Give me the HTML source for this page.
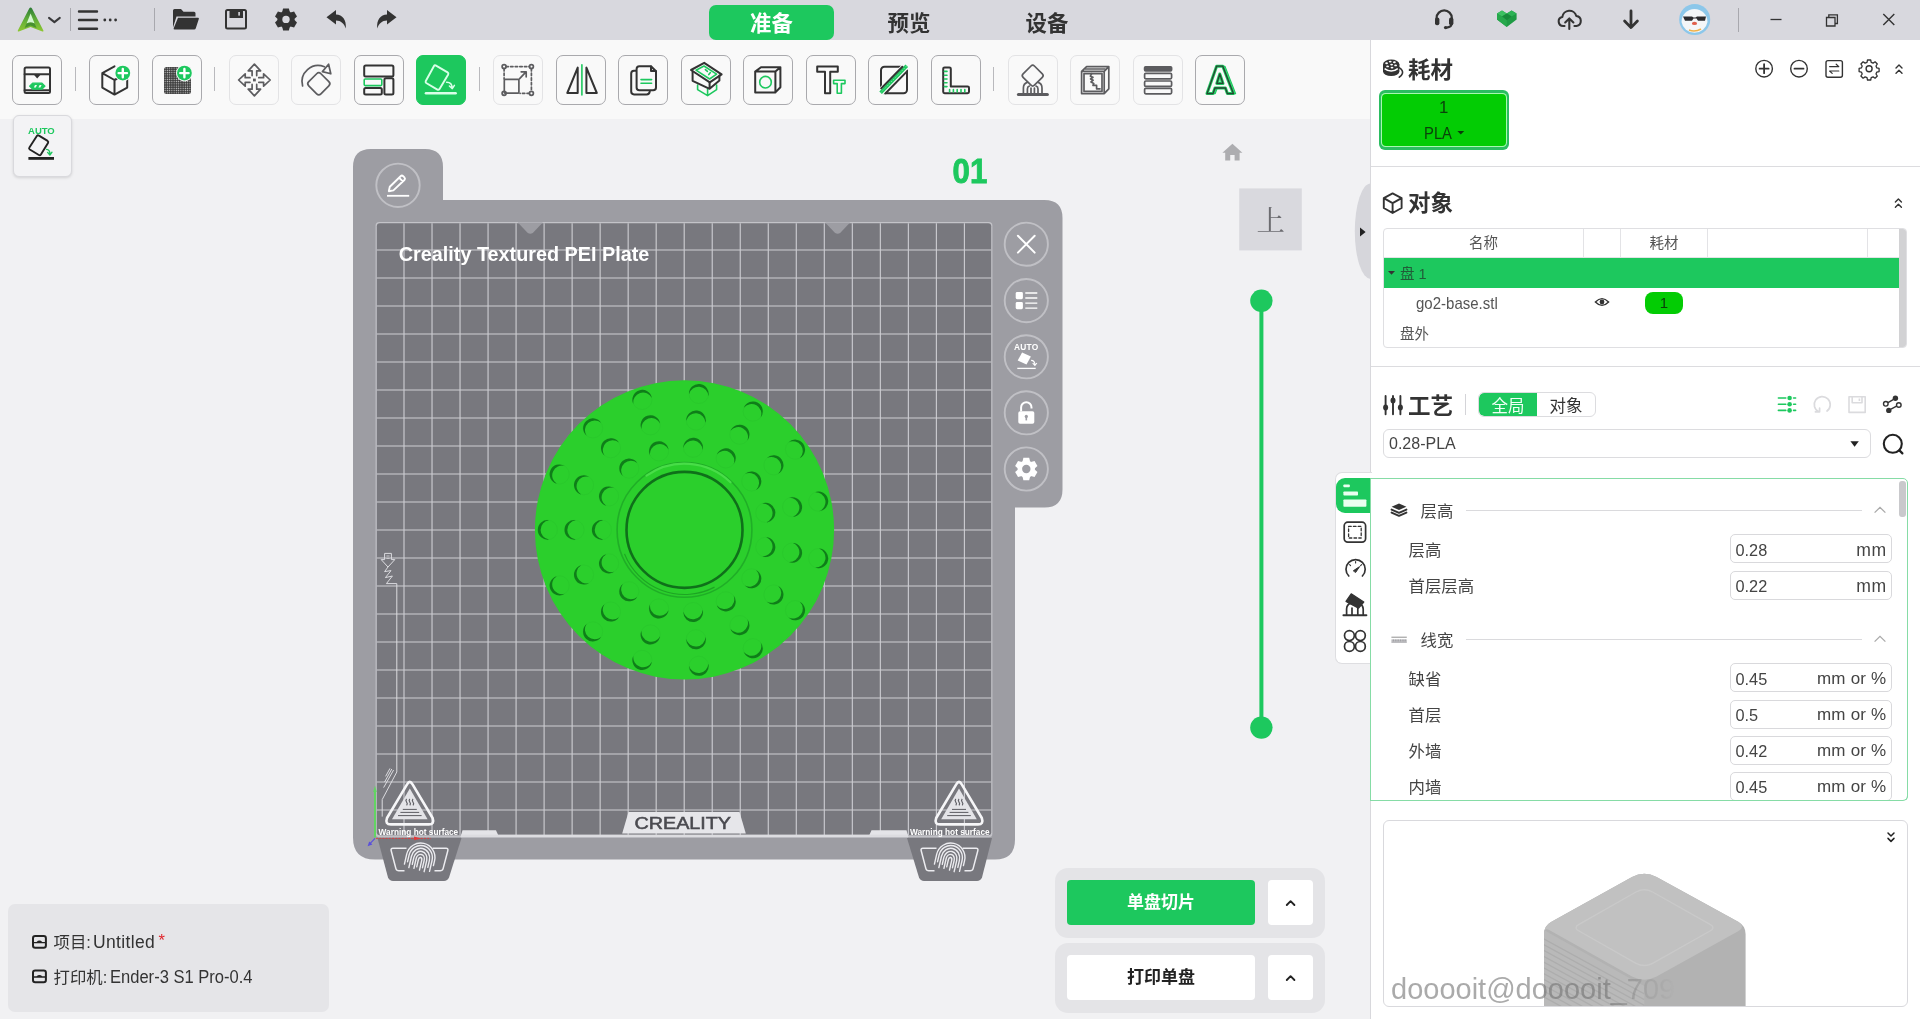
<!DOCTYPE html>
<html lang="zh-CN">
<head>
<meta charset="utf-8">
<title>Creality Print</title>
<style>
*{box-sizing:border-box;margin:0;padding:0}
html,body{width:1920px;height:1019px;overflow:hidden;background:#f1f1f3}
body{position:relative;will-change:transform;font-family:"Liberation Sans","Noto Sans CJK SC",sans-serif;color:#333;font-size:16px;line-height:1}
.abs{position:absolute}
svg{position:absolute;overflow:visible}
#topbar{position:absolute;left:0;top:0;width:1920px;height:40px;background:#d8d8de}
#toolbar{position:absolute;left:0;top:40px;width:1370px;height:78.6px;background:#f9f9f9}
#rpanel{position:absolute;left:1370px;top:40px;width:550px;height:979px;background:#fff}
.tb{position:absolute;top:55px;width:50px;height:50px;border:1px solid #a9a9ad;border-radius:7px;background:#f9f9f9}
.tb.dis{border-color:#e3e3e5}
.tb.on{background:#1dc85e;border-color:#1dc85e}
.tsep{position:absolute;top:67px;width:1px;height:24px;background:#b9b9bd}
.tab{position:absolute;top:5px;height:35px;font-weight:bold;font-size:21.4px;line-height:39px;text-align:center;color:#333}
.h1{position:absolute;font-weight:bold;font-size:22.5px;line-height:24px;color:#333;white-space:nowrap}
.t{position:absolute;white-space:nowrap;line-height:20px}
.inp{position:absolute;left:1730px;width:162px;height:29px;border:1px solid #d9d9dc;border-radius:5px;background:#fff}
.inp b{position:absolute;left:4.5px;top:4.4px;font-weight:normal;font-size:16.3px;line-height:20px;color:#444}
.inp i{position:absolute;right:4.6px;top:4.4px;font-style:normal;font-size:17px;line-height:20px;color:#444;letter-spacing:.2px}
.inp i.m{font-size:17.6px;letter-spacing:.5px;right:4.4px}
.lbl{position:absolute;left:1408.6px;font-size:16.4px;line-height:20px;color:#444;white-space:nowrap}
.sx{display:inline-block;transform-origin:0 50%}
</style>
</head>
<body>
<div id="topbar"></div>
<div id="toolbar"></div>
<!-- top bar left icons -->
<svg class="abs" style="left:0;top:0" width="420" height="40" viewBox="0 0 420 40">
  <defs>
    <linearGradient id="lg1" x1="0" y1="0" x2="0" y2="1"><stop offset="0" stop-color="#2a7a35"/><stop offset=".45" stop-color="#5aa838"/><stop offset="1" stop-color="#8fc833"/></linearGradient>
  </defs>
  <path d="M30.6 7.4 Q31.4 7.4 32 8.6 L43.4 30.6 Q43.8 31.8 42.4 31.4 L30.6 27 L18.8 31.4 Q17.4 31.8 17.8 30.6 L29.2 8.6 Q29.8 7.4 30.6 7.4 Z" fill="url(#lg1)"/>
  <path d="M30.6 13.6 L34.6 23.4 Q30.6 21.6 26.6 23.4 Z" fill="#d4f7d0"/>
  <path d="M26.6 23.4 Q30.6 21.6 34.6 23.4 L36.6 28 L30.6 25.6 L24.6 28 Z" fill="#3f8a2e" opacity=".85"/>
  <path d="M49 17.9 L54.4 22.1 L59.8 17.9" fill="none" stroke="#3a3a3c" stroke-width="2" stroke-linecap="round" stroke-linejoin="round"/>
  <rect x="70" y="8" width="1" height="23" fill="#a8a8ae"/>
  <g stroke="#333" stroke-width="2.4" stroke-linecap="round"><path d="M79 11.5H97M79 20H97M79 28.7H97"/></g>
  <g fill="#333"><circle cx="104.8" cy="20" r="1.4"/><circle cx="110.2" cy="20" r="1.4"/><circle cx="115.6" cy="20" r="1.4"/></g>
  <rect x="154" y="8" width="1" height="23" fill="#a8a8ae"/>
  <!-- folder -->
  <path d="M173 10.5 q0-1.5 1.5-1.5 h6.5 l2.5 2.8 h10.5 q1.5 0 1.5 1.5 v3.2 h-19 l-3.5 11 Z" fill="#333"/>
  <path d="M178 17.8 h20 q1.2 0 0.8 1.2 l-3 9.3 q-0.4 1.2 -1.6 1.2 h-19.5 q-1.4 0 -1 -1.2 Z" fill="#333"/>
  <!-- save -->
  <rect x="226" y="10" width="20" height="18.6" rx="1.5" fill="none" stroke="#333" stroke-width="2"/>
  <path d="M229.5 10 h13.5 v8 h-13.5 Z" fill="#333"/>
  <rect x="238.3" y="12" width="1.6" height="3.6" fill="#d8d8de"/>
  <!-- gear -->
  <g transform="translate(286 19.4)" fill="#333">
    <path id="gt" d="M-2.9 -11 h5.8 l0.9 3.6 h-7.6 Z"/>
    <use href="#gt" transform="rotate(60)"/><use href="#gt" transform="rotate(120)"/><use href="#gt" transform="rotate(180)"/><use href="#gt" transform="rotate(240)"/><use href="#gt" transform="rotate(300)"/>
    <circle r="8.6"/><circle r="3.7" fill="#d8d8de"/>
  </g>
  <!-- undo -->
  <path d="M326.5 17.2 L336 10 V14.6 C342.5 15 346.5 19.5 345.8 28.4 C344 23.2 341 20.6 336 20.4 V24.6 Z" fill="#333"/>
  <!-- redo -->
  <path d="M396.5 17.2 L387 10 V14.6 C380.5 15 376.5 19.5 377.2 28.4 C379 23.2 382 20.6 387 20.4 V24.6 Z" fill="#333"/>
</svg>
<!-- tabs -->
<div class="tab" style="left:709px;width:125px;background:#1dc85e;color:#fff;border-radius:7px">准备</div>
<div class="tab" style="left:859px;width:100px">预览</div>
<div class="tab" style="left:997px;width:100px">设备</div>
<svg class="abs" style="left:1420px;top:0" width="500" height="40" viewBox="1420 0 500 40">
  <!-- headset -->
  <g fill="none" stroke="#333" stroke-width="2.2" stroke-linecap="round">
    <path d="M1436.6 20 v-2 a7.6 7.6 0 0 1 15.2 0 v2"/>
    <path d="M1451.8 23 q0 4 -5 4.6"/>
  </g>
  <rect x="1435" y="17.6" width="4.4" height="7.6" rx="2" fill="#333"/>
  <rect x="1449" y="17.6" width="4.4" height="7.6" rx="2" fill="#333"/>
  <circle cx="1445.6" cy="27.6" r="1.7" fill="#333"/>
  <!-- heart cube -->
  <path d="M1497 13.5 L1502 10.5 L1506.8 13.5 L1511.6 10.5 L1516.6 13.5 L1516.6 19.5 L1506.8 27 L1497 19.5 Z" fill="#1f9a44"/>
  <path d="M1497 13.5 L1502 10.5 L1506.8 13.5 L1502 16.6 Z" fill="#3cc061"/>
  <path d="M1506.8 13.5 L1511.6 10.5 L1516.6 13.5 L1511.6 16.6 Z" fill="#2db255"/>
  <path d="M1502 16.6 L1506.8 13.5 L1511.6 16.6 L1506.8 20.2 Z" fill="#178a3a"/>
  <path d="M1497 13.5 L1502 16.6 L1506.8 20.2 L1506.8 27 L1497 19.5 Z" fill="#27a84c"/>
  <!-- cloud upload -->
  <g transform="translate(1569.3 20) scale(.9) translate(-1569.3 -20)"><path d="M1564 26.6 h-1.5 a5 5 0 0 1 -1 -9.9 a8 8 0 0 1 15.6 -1.2 a5.6 5.6 0 0 1 0.2 11.1 h-2.3" fill="none" stroke="#333" stroke-width="2.3" stroke-linecap="round" stroke-linejoin="round"/></g>
  <path d="M1569.3 29 v-10 M1565.2 22.4 l4.1 -4 l4.1 4" fill="none" stroke="#333" stroke-width="2.1" stroke-linecap="round" stroke-linejoin="round"/>
  <!-- down arrow -->
  <path d="M1631 11 v16 M1624.6 21 l6.4 6.6 l6.4 -6.6" fill="none" stroke="#333" stroke-width="2.8" stroke-linecap="round" stroke-linejoin="round"/>
  <!-- avatar -->
  <circle cx="1694.7" cy="19.5" r="15.5" fill="#8cc7ea"/>
  <path d="M1681.5 22 a13 13 0 0 1 26 0 a13.2 13 0 0 1 -26 0 Z" fill="#f4f6f8"/>
  <path d="M1683 16.5 h9 l1.5 1 h2 l1.5 -1 h9 l-1 4.2 h-7 l-1.5 -2.2 h-3 l-1.5 2.2 h-7 Z" fill="#2b2b2e"/>
  <ellipse cx="1694.5" cy="23.4" rx="2.6" ry="1.6" fill="#e0604c"/>
  <path d="M1689 30 q6 2.5 12 -1" stroke="#f0b24a" stroke-width="1.6" fill="none"/>
  <rect x="1738" y="8" width="1" height="24" fill="#a8a8ae"/>
  <!-- window controls -->
  <path d="M1770.5 19.5 h11" stroke="#333" stroke-width="1.3"/>
  <path d="M1826.5 17.5 h8.5 v8.5 h-8.5 Z M1828.8 17.5 v-2.6 h8.6 v8.6 h-2.4" fill="none" stroke="#333" stroke-width="1.3"/>
  <path d="M1883.3 14 l11 11 M1894.3 14 l-11 11" stroke="#333" stroke-width="1.4"/>
</svg>
<style>
.tb svg{left:-1px;top:-1px;width:50px;height:50px}
.k{fill:none;stroke:#333;stroke-width:2;stroke-linejoin:round;stroke-linecap:round}
.kd{fill:none;stroke:#5c5c5f;stroke-width:1.7;stroke-linejoin:round;stroke-linecap:round}
.g{fill:none;stroke:#1dc85e;stroke-width:1.6;stroke-linejoin:round;stroke-linecap:round}
</style>
<div class="tsep" style="left:75px"></div><div class="tsep" style="left:214px"></div><div class="tsep" style="left:479px"></div><div class="tsep" style="left:993px"></div>
<!-- 1 printer -->
<div class="tb" style="left:12px"><svg viewBox="0 0 50 50">
 <rect x="12.6" y="12.6" width="25.4" height="25.4" rx="1.5" class="k" stroke-width="2.2"/>
 <path d="M12.6 19.2H38" class="k" stroke-width="1.4"/><path d="M21.5 19.2h7.4l-3.7 4.2Z" fill="#333"/>
 <path d="M12.6 35.2H38" class="k" stroke-width="1.4"/>
 <path d="M17.6 31.2 L20.6 28.2 H30 L33 31.2 L30 34.2 H20.6 Z" fill="#1dc85e" stroke="#1dc85e" stroke-width="1.2" stroke-linejoin="round"/><path d="M21.8 32.6l1.2-2.6h2l-1.2 2.6ZM26.4 32.6l1.2-2.6h2l-1.2 2.6Z" fill="#e8fff0"/>
</svg></div>
<!-- 2 cube+ -->
<div class="tb" style="left:89px"><svg viewBox="0 0 50 50">
 <path d="M25.5 11.3 L13.3 18.2 V32.6 L25.5 39.6 L38.2 32.6 V18.2 M13.3 18.2 L25.5 25 V39.6 M25.5 25 L38.2 18.2" class="k"/>
 <circle cx="33.8" cy="18.1" r="8.4" fill="#f9f9f9"/><circle cx="33.8" cy="18.1" r="7.4" fill="#1dc85e"/>
 <path d="M29.6 18.1h8.4M33.8 13.9v8.4" stroke="#fff" stroke-width="2.4" stroke-linecap="round"/>
</svg></div>
<!-- 3 grid+ -->
<div class="tb" style="left:152px"><svg viewBox="0 0 50 50">
 <defs><pattern id="dots" x="12" y="12" width="2.25" height="2.25" patternUnits="userSpaceOnUse"><rect width="2.25" height="2.25" fill="#333"/><rect x="0.55" y="0.55" width="1.15" height="1.15" fill="#d9d9d9"/></pattern></defs>
 <rect x="12" y="12" width="27" height="27" rx="2.5" fill="url(#dots)"/>
 <circle cx="32.4" cy="18.1" r="8.4" fill="#f9f9f9"/><circle cx="32.4" cy="18.1" r="7.4" fill="#1dc85e"/>
 <path d="M28.2 18.1h8.4M32.4 13.9v8.4" stroke="#fff" stroke-width="2.4" stroke-linecap="round"/>
</svg></div>
<!-- 4 move -->
<div class="tb dis" style="left:229px"><svg viewBox="0 0 50 50"><g transform="translate(25.4 25)">
 <path id="mv" d="M-2.3 -4.4 V-9.2 H-6.2 L0 -15.8 L6.2 -9.2 H2.3 V-4.4" class="kd" stroke-width="1.6"/>
 <use href="#mv" transform="rotate(90)"/><use href="#mv" transform="rotate(180)"/><use href="#mv" transform="rotate(270)"/>
 <rect x="-1.4" y="-1.4" width="2.8" height="2.8" fill="#5c5c5f"/></g>
</svg></div>
<!-- 5 rotate -->
<div class="tb dis" style="left:291px"><svg viewBox="0 0 50 50">
 <rect x="-8.6" y="-8.6" width="17.2" height="17.2" rx="3" transform="translate(27.8 28.8) rotate(45)" class="kd"/>
 <path d="M11.6 31 A16.2 16.2 0 0 1 33.4 11.8" class="kd"/>
 <path d="M31.4 16.6 L37.6 9.2 L39.8 18.8 Z" class="kd"/>
</svg></div>
<!-- 6 layout -->
<div class="tb" style="left:354px"><svg viewBox="0 0 50 50">
 <rect x="10.2" y="10.6" width="29.2" height="10.8" rx="1.5" class="k"/>
 <rect x="10.2" y="24" width="17.6" height="6.6" rx="1" class="g" stroke-width="2" fill="#b8f0cf"/>
 <rect x="10.2" y="33" width="17.6" height="6.4" rx="1.5" class="k"/>
 <rect x="30.4" y="23.3" width="9" height="16.1" rx="1.5" class="k"/>
</svg></div>
<!-- 7 lay on face (active) -->
<div class="tb on" style="left:416px"><svg viewBox="0 0 50 50">
 <path d="M19.6 10.4 L31.6 17.4 Q32.8 18.2 32.2 19.4 L23.4 34.2 Q22.6 35.2 21.4 34.6 L10.2 28 Q9.2 27.2 9.8 26 L18 11 Q18.6 9.9 19.6 10.4 Z" fill="none" stroke="#d9ffe8" stroke-width="1.9" stroke-linejoin="round"/>
 <path d="M10.5 45.5" />
 <path d="M10 38.3 H39.6" stroke="#d9ffe8" stroke-width="2.6" stroke-linecap="round"/>
 <path d="M30.6 27.2 Q35.8 27 36.2 32.8 M33.4 31 L36.3 33.6 L38.4 30.4" fill="none" stroke="#d9ffe8" stroke-width="1.5" stroke-linecap="round" stroke-linejoin="round"/>
</svg></div>
<!-- 8 scale -->
<div class="tb dis" style="left:493px"><svg viewBox="0 0 50 50">
 <path d="M13 11.6 H36.6 M38.4 13.6 V36.4 M36.4 38.3 H27 M11.1 13.6 V24" class="kd" stroke-width="1.4" stroke-dasharray="2.4 2.2" stroke-linecap="butt"/>
 <circle cx="11.1" cy="11.6" r="2" class="kd" stroke-width="1.2"/><circle cx="38.4" cy="11.6" r="2" class="kd" stroke-width="1.2"/><circle cx="38.4" cy="38.3" r="2" class="kd" stroke-width="1.2"/><circle cx="11.1" cy="38.3" r="2" class="kd" stroke-width="1.2"/>
 <rect x="11.3" y="24.4" width="14.6" height="13.8" rx="1" class="kd" stroke-width="2"/>
 <path d="M26.4 23.8 L32.8 17.2 M28.2 16.8 H33.2 V21.8" class="kd" stroke-width="1.6"/>
</svg></div>
<!-- 9 mirror -->
<div class="tb" style="left:556px"><svg viewBox="0 0 50 50">
 <path d="M21.7 12.6 V38 H11.3 Z M30.4 12.6 V38 H40.8 Z" class="k"/>
 <path d="M25.9 9.8 V40" class="g" stroke-width="1.5"/>
</svg></div>
<!-- 10 copy -->
<div class="tb" style="left:618px"><svg viewBox="0 0 50 50">
 <path d="M18 15.8 H16 Q13.2 15.8 13.2 18.6 V36.6 Q13.2 39.4 16 39.4 H28.6 Q31.4 39.4 31.8 36.4" class="k"/>
 <path d="M33 11.2 H21.4 Q18.6 11.2 18.6 14 V32.4 Q18.6 35.2 21.4 35.2 H35.2 Q38 35.2 38 32.4 V16.2 Z" class="k" fill="#f9f9f9"/>
 <path d="M33 11.4 V16 H37.8" class="k" stroke-width="1.3"/>
 <path d="M23 24.6 H33.6 M23 28.2 H33.6" class="g" stroke-width="1.8"/>
</svg></div>
<!-- 11 split/box -->
<div class="tb" style="left:681px"><svg viewBox="0 0 50 50">
 <path d="M16.6 30 V34.6 L26.6 40.6 L35.6 34.6 V30 M26.6 40.6 V34" class="g" stroke-width="1.4"/>
 <path d="M11.6 16.6 V25.8 L28.6 33.8 L38.4 25.6 V20.6 M28.6 33.8 V27.4" class="k" stroke-width="1.8"/>
 <path d="M23.2 7.8 L40.6 19.4 L28.8 27.4 L10 15 Z" class="k" stroke-width="1.8" fill="#f9f9f9"/>
 <path d="M23 11 L35.6 19.2 L28.6 24 L15 15.2 Z" class="g" stroke-width="1.3" fill="#c9f3da"/>
 <path d="M24.4 14.6 l2 1.8 M29.4 17.6 l-1.6 2" class="g" stroke-width="1.2"/>
</svg></div>
<!-- 12 cube circle -->
<div class="tb" style="left:743px"><svg viewBox="0 0 50 50">
 <path d="M12.2 16.6 H32.4 V37.4 H12.2 Z M12.2 16.6 L18 12.2 H37.4 L32.4 16.6 M37.4 12.2 V32.2 L32.4 37.4" class="k"/>
 <circle cx="22.5" cy="27.2" r="5.8" class="g" stroke-width="1.7"/>
</svg></div>
<!-- 13 text -->
<div class="tb" style="left:806px"><svg viewBox="0 0 50 50">
 <path d="M11.2 11.6 H31.8 V16.8 H24.2 V38.2 H19 V16.8 H11.2 Z" class="k"/>
 <path d="M27.6 25.2 H39 V28.6 H35.4 V38.2 H31.2 V28.6 H27.6 Z" class="g" stroke-width="1.7"/>
</svg></div>
<!-- 14 cut -->
<div class="tb" style="left:868px"><svg viewBox="0 0 50 50">
 <rect x="13" y="11.8" width="26" height="26.4" rx="3.5" class="k"/>
 <path d="M12.2 37.4 L38.4 10.4" stroke="#f9f9f9" stroke-width="7.4"/>
 <path d="M12.6 37.8 L38.8 10.8" stroke="#1dc85e" stroke-width="3.6"/>
 <path d="M12.6 37.8 L38.8 10.8" stroke="#8fe6b2" stroke-width="0.8" stroke-dasharray="1.6 1.4"/>
 <path d="M13.2 33.4 L34.4 11.8 M17.6 38.2 L39 16.4" class="k" stroke-width="1.8"/>
</svg></div>
<!-- 15 measure -->
<div class="tb" style="left:931px"><svg viewBox="0 0 50 50">
 <path d="M13.6 12.4 H18.4 Q19.8 12.4 19.8 13.8 V31.4 H36.6 Q38 31.4 38 32.8 V36.8 Q38 38.2 36.6 38.2 H13.6 Q12.2 38.2 12.2 36.8 V13.8 Q12.2 12.4 13.6 12.4 Z" class="k"/>
 <path d="M13.4 16.4h2.6M13.4 20.2h2.6M13.4 24h2.6M13.4 27.8h2.6M13.4 31.6h2.6M18.6 37v-2.4M22.4 37v-2.4M26.2 37v-2.4M30 37v-2.4M33.8 37v-2.4" class="g" stroke-width="1"/>
</svg></div>
<!-- 16 support -->
<div class="tb dis" style="left:1008px"><svg viewBox="0 0 50 50">
 <rect x="-8" y="-8" width="16" height="16" rx="2.4" transform="translate(24.7 20.6) rotate(45)" class="kd"/>
 <path d="M15.4 38 V33 Q15.4 28.6 19.2 27.4 M34 38 V33 Q34 28.6 30.2 27.4 M19.4 38 V34 Q19.4 31.6 21.4 31 M30 38 V34 Q30 31.6 28 31 M23 38 V33 M26.4 38 V33" class="kd" stroke-width="1.3"/>
 <path d="M10.4 39.6 H39.4" stroke="#5c5c5f" stroke-width="3" stroke-linecap="round"/>
</svg></div>
<!-- 17 seam -->
<div class="tb dis" style="left:1070px"><svg viewBox="0 0 50 50">
 <path d="M11.6 16.4 H34.2 V38.6 H11.6 Z M11.6 16.4 L16.6 11.6 H38.8 L34.2 16.4 M38.8 11.6 V33.8 L34.2 38.6" class="kd"/>
 <path d="M14 18.6 H32 V36.4 H14 Z M15.6 14 H35" class="kd" stroke-width="1"/>
 <path d="M21.6 18.6 l-1.2 2.6 l2.6 1 l-2.4 1.8 l2.6 1.2 l-2.2 1.8 l2.8 1.4 l-0.8 2 h3.6 v3.4 h3.4" class="kd" stroke-width="1.3"/>
</svg></div>
<!-- 18 layers -->
<div class="tb dis" style="left:1133px"><svg viewBox="0 0 50 50">
 <rect x="11.6" y="11.8" width="27" height="4" rx="1" class="kd" style="fill:#5c5c5f"/>
 <rect x="11.6" y="18.4" width="27" height="5.4" rx="1.2" class="kd"/>
 <rect x="11.6" y="26" width="27" height="5.4" rx="1.2" class="kd"/>
 <rect x="11.6" y="33.4" width="27" height="5.4" rx="1.2" class="kd"/>
</svg></div>
<!-- 19 emboss A -->
<div class="tb" style="left:1195px"><svg viewBox="0 0 50 50">
 <path d="M23.8 11.4 H30 L40.6 38.6 H34.6 L32.6 33 H22.2 L20.2 38.6 H14.2 Z" fill="#8fe6b2" stroke="#1dc85e" stroke-width="1.2" stroke-linejoin="round"/>
 <path d="M21.6 11.2 H27.8 L38.4 38.6 H32.4 L30.4 33 H20 L18 38.6 H12 Z M24.8 19 L21.8 28.4 H28 Z" fill="#f9f9f9" stroke="#1dc85e" stroke-width="3" stroke-linejoin="round"/>
 <path d="M21.6 11.2 H27.8 L38.4 38.6 H32.4 L30.4 33 H20 L18 38.6 H12 Z M24.8 19 L21.8 28.4 H28 Z" fill="none" stroke="#274233" stroke-width="1.3" stroke-linejoin="round"/>
</svg></div>
<!-- AUTO button -->
<div class="abs" style="left:13px;top:115.4px;width:58.5px;height:61.4px;border-radius:6px;background:#f3f3f5;border:1.5px solid #d9d9dd;box-shadow:0 1px 3px rgba(0,0,0,.13)">
 <svg style="left:-1.5px;top:-0.9px" width="58" height="60" viewBox="0 0 58 60">
  <text x="28.4" y="18.2" text-anchor="middle" font-family="Liberation Sans, sans-serif" font-weight="bold" font-size="9.5" fill="#1dc85e">AUTO</text>
  <path d="M24 19.8 Q24.8 18.8 26 19.6 L34.6 24.9 Q35.7 25.7 35 26.9 L27.9 38.5 Q27.1 39.7 25.9 39 L16.8 33.5 Q15.6 32.7 16.4 31.5 Z" fill="none" stroke="#222" stroke-width="1.9" stroke-linejoin="round"/>
  <path d="M15.4 42.4 H41" stroke="#222" stroke-width="2.8"/>
  <path d="M33.6 33.4 Q36.8 33.8 36.9 37.6 M34.6 36.4 L36.9 39 L39 36.2" fill="none" stroke="#1dc85e" stroke-width="1.4" stroke-linecap="round" stroke-linejoin="round"/>
 </svg>
</div>
<svg class="abs" style="left:0;top:0" width="1370" height="1019" viewBox="0 0 1370 1019">
<path d="M353 167 Q353 149 371 149 H425 Q443 149 443 167 V200 H1044.5 Q1062.5 200 1062.5 218 V489.5 Q1062.5 507.5 1044.5 507.5 H1015 V839.5 Q1015 859.5 995 859.5 H375 Q353 859.5 353 837.5 Z" fill="#9d9da3"/>
<rect x="375.6" y="222" width="616.8" height="615.2" rx="3.5" fill="#c3c3c8"/>
<rect x="376.8" y="223.2" width="614.4" height="612.0" rx="3" fill="#78787e"/>
<path d="M404.00 223.2V835.2M376.8 250.00H991.1999999999999M432.02 223.2V835.2M376.8 278.00H991.1999999999999M460.04 223.2V835.2M376.8 306.00H991.1999999999999M488.06 223.2V835.2M376.8 334.00H991.1999999999999M516.08 223.2V835.2M376.8 362.00H991.1999999999999M544.10 223.2V835.2M376.8 390.00H991.1999999999999M572.12 223.2V835.2M376.8 418.00H991.1999999999999M600.14 223.2V835.2M376.8 446.00H991.1999999999999M628.16 223.2V835.2M376.8 474.00H991.1999999999999M656.18 223.2V835.2M376.8 502.00H991.1999999999999M684.20 223.2V835.2M376.8 530.00H991.1999999999999M712.22 223.2V835.2M376.8 558.00H991.1999999999999M740.24 223.2V835.2M376.8 586.00H991.1999999999999M768.26 223.2V835.2M376.8 614.00H991.1999999999999M796.28 223.2V835.2M376.8 642.00H991.1999999999999M824.30 223.2V835.2M376.8 670.00H991.1999999999999M852.32 223.2V835.2M376.8 698.00H991.1999999999999M880.34 223.2V835.2M376.8 726.00H991.1999999999999M908.36 223.2V835.2M376.8 754.00H991.1999999999999M936.38 223.2V835.2M376.8 782.00H991.1999999999999M964.40 223.2V835.2M376.8 810.00H991.1999999999999" stroke="#cdcdd2" stroke-width="1.12" fill="none"/>
<path d="M517.8 222.5 H542.8 L532.8 233 Q530.3 234.6 527.8 233 Z" fill="#9d9da3"/>
<path d="M825.1 222.5 H850.1 L840.1 233 Q837.6 234.6 835.1 233 Z" fill="#9d9da3"/>
<path d="M460.5 837 L462.5 830.2 H496 L499 837 Z" fill="#e4e4e8"/>
<path d="M908.5 837 L906.5 830.2 H871.5 L868.5 837 Z" fill="#e4e4e8"/>
<rect x="461" y="834.6" width="447" height="2.8" fill="#dcdce0"/>
<path d="M628.5 812 H739.5 L745.8 833.4 H622.2 Z" fill="#e6e6ea"/>
<text x="634.5" y="829.4" font-family="Liberation Sans, sans-serif" font-size="17" textLength="96.5" lengthAdjust="spacingAndGlyphs" fill="#4a4a50" stroke="#4a4a50" stroke-width=".55">CREALITY</text>
<path d="M377.5 838 H461.5 L449.0 877.6 Q447.5 881 444.0 881 H393.0 Q389.5 881 388.0 877.6 Z" fill="#78787e"/>
<path d="M406.5 848.2 H393.0 Q390.5 848.2 391.2 850.7 L395.9 868.6 Q396.5 870.8 398.9 870.8 H404.5 M432.5 848.2 H446.0 Q448.5 848.2 447.8 850.7 L443.1 868.6 Q442.5 870.8 440.1 870.8 H434.5" fill="none" stroke="#ececf0" stroke-width="1.5"/>
<path d="M417.8 867.4 V859.9 A1.7 2.5 0 0 1 421.2 859.9 V869.9M415.4 869.4 V859.3 A4.1 5.0 0 0 1 423.6 859.3 V866.9M412.9 865.9 V858.8 A6.6 7.6 0 0 1 426.1 858.8 V870.4M410.3 869.9 V858.2 A9.2 10.1 0 0 1 428.7 858.2 V865.4M407.7 864.4 V857.7 A11.8 12.4 0 0 1 431.3 857.7 V868.9M405.2 867.4 V857.3 A14.3 14.4 0 0 1 433.8 857.3 V862.4" fill="none" stroke="#ececf0" stroke-width="1.4" stroke-linecap="round" transform="rotate(13 419.5 862.4)"/>
<path d="M907 838 H992 L982.0 877.6 Q980.5 881 977.0 881 H924.0 Q920.5 881 919.0 877.6 Z" fill="#78787e"/>
<path d="M936.5 848.2 H923.0 Q920.5 848.2 921.2 850.7 L925.9 868.6 Q926.5 870.8 928.9 870.8 H934.5 M962.5 848.2 H976.0 Q978.5 848.2 977.8 850.7 L973.1 868.6 Q972.5 870.8 970.1 870.8 H964.5" fill="none" stroke="#ececf0" stroke-width="1.5"/>
<path d="M947.8 867.4 V859.9 A1.7 2.5 0 0 1 951.2 859.9 V869.9M945.4 869.4 V859.3 A4.1 5.0 0 0 1 953.6 859.3 V866.9M942.9 865.9 V858.8 A6.6 7.6 0 0 1 956.1 858.8 V870.4M940.3 869.9 V858.2 A9.2 10.1 0 0 1 958.7 858.2 V865.4M937.7 864.4 V857.7 A11.8 12.4 0 0 1 961.3 857.7 V868.9M935.2 867.4 V857.3 A14.3 14.4 0 0 1 963.8 857.3 V862.4" fill="none" stroke="#ececf0" stroke-width="1.4" stroke-linecap="round" transform="rotate(13 949.5 862.4)"/>
<path d="M407.2 784.1999999999999 Q409.8 779.6 412.40000000000003 784.1999999999999 L432.6 818.0 Q434.8 824.4 428.8 824.4 H390.8 Q384.8 824.4 387.0 818.0 Z" fill="none" stroke="#f6f6f8" stroke-width="2.6" stroke-linejoin="round"/>
<path d="M409.8 788.4 L427.6 819.2 H392.0 Z" fill="#e4e4e8"/>
<path d="M406.6 799 q-1.4 1.6 0 3.2 q1.4 1.6 0 3.2M409.8 799 q-1.4 1.6 0 3.2 q1.4 1.6 0 3.2M413.0 799 q-1.4 1.6 0 3.2 q1.4 1.6 0 3.2" fill="none" stroke="#5c5c62" stroke-width="1.15"/>
<path d="M402.8 809.4 H416.8 M400.40000000000003 812.4 H419.2 M398.0 815.6 H421.6" stroke="#5c5c62" stroke-width="1"/>
<path d="M956.4 784.1999999999999 Q959 779.6 961.6 784.1999999999999 L981.8 818.0 Q984 824.4 978 824.4 H940 Q934 824.4 936.2 818.0 Z" fill="none" stroke="#f6f6f8" stroke-width="2.6" stroke-linejoin="round"/>
<path d="M959 788.4 L976.8 819.2 H941.2 Z" fill="#e4e4e8"/>
<path d="M955.8 799 q-1.4 1.6 0 3.2 q1.4 1.6 0 3.2M959 799 q-1.4 1.6 0 3.2 q1.4 1.6 0 3.2M962.2 799 q-1.4 1.6 0 3.2 q1.4 1.6 0 3.2" fill="none" stroke="#5c5c62" stroke-width="1.15"/>
<path d="M952 809.4 H966 M949.6 812.4 H968.4 M947.2 815.6 H970.8" stroke="#5c5c62" stroke-width="1"/>
<text x="378.6" y="835.4" font-family="Liberation Sans, sans-serif" font-weight="bold" font-size="9.6" textLength="79.6" lengthAdjust="spacingAndGlyphs" fill="#fff">Warning hot surface</text>
<text x="910" y="835.4" font-family="Liberation Sans, sans-serif" font-weight="bold" font-size="9.6" textLength="79.6" lengthAdjust="spacingAndGlyphs" fill="#fff">Warning hot surface</text>
<g fill="none" stroke="#dcdce0" stroke-width="1">
<path d="M384.6 553.4 H391.4 V559.6 H394.8 L388 567 L381.2 559.6 H384.6 Z"/>
<path d="M386.4 556 H389.6 M386.4 558.4 H389.6" stroke-width="0.8"/>
<path d="M388 567 L384.6 571.6 L391 570.6 L385.4 577.6 L392.4 576 L386.4 583.6 H396.8 V772 L382.2 799.6 V816.6"/>
<path d="M383.6 787.6 L393.6 770 M384.6 782 L391.8 769 M385.6 776.4 L390 768.4"/>
</g>
<path d="M375 837.6 V790" stroke="#62d462" stroke-width="2"/><path d="M373.2 792 L375 785.6 L376.8 792 Z" fill="#62d462"/>
<path d="M376 838.4 H431" stroke="#e23a3a" stroke-width="0.9" stroke-dasharray="2 1.2"/><path d="M414 836.6 L421 838.4 L414 840.2 Z" fill="#e23a3a"/>
<path d="M375 838.4 L370 843.6" stroke="#5a50dc" stroke-width="1.2"/><path d="M367.6 846.2 L369.2 841.4 L372.4 844.6 Z" fill="#5a50dc"/>
<circle cx="684.5" cy="529.9" r="149.6" fill="#2bcf2c"/>
<path d="M591.90 529.90a9.8 9.8 0 1 0 19.6 0a9.8 9.8 0 1 0 -19.6 0M564.50 529.90a9.8 9.8 0 1 0 19.6 0a9.8 9.8 0 1 0 -19.6 0M537.80 529.90a9.8 9.8 0 1 0 19.6 0a9.8 9.8 0 1 0 -19.6 0M599.06 496.22a9.8 9.8 0 1 0 19.6 0a9.8 9.8 0 1 0 -19.6 0M574.03 485.08a9.8 9.8 0 1 0 19.6 0a9.8 9.8 0 1 0 -19.6 0M549.64 474.22a9.8 9.8 0 1 0 19.6 0a9.8 9.8 0 1 0 -19.6 0M619.30 468.37a9.8 9.8 0 1 0 19.6 0a9.8 9.8 0 1 0 -19.6 0M600.96 448.01a9.8 9.8 0 1 0 19.6 0a9.8 9.8 0 1 0 -19.6 0M583.10 428.16a9.8 9.8 0 1 0 19.6 0a9.8 9.8 0 1 0 -19.6 0M649.11 451.15a9.8 9.8 0 1 0 19.6 0a9.8 9.8 0 1 0 -19.6 0M640.65 425.09a9.8 9.8 0 1 0 19.6 0a9.8 9.8 0 1 0 -19.6 0M632.40 399.70a9.8 9.8 0 1 0 19.6 0a9.8 9.8 0 1 0 -19.6 0M683.35 447.55a9.8 9.8 0 1 0 19.6 0a9.8 9.8 0 1 0 -19.6 0M686.22 420.30a9.8 9.8 0 1 0 19.6 0a9.8 9.8 0 1 0 -19.6 0M689.01 393.75a9.8 9.8 0 1 0 19.6 0a9.8 9.8 0 1 0 -19.6 0M716.10 458.19a9.8 9.8 0 1 0 19.6 0a9.8 9.8 0 1 0 -19.6 0M729.80 434.46a9.8 9.8 0 1 0 19.6 0a9.8 9.8 0 1 0 -19.6 0M743.15 411.34a9.8 9.8 0 1 0 19.6 0a9.8 9.8 0 1 0 -19.6 0M741.69 481.23a9.8 9.8 0 1 0 19.6 0a9.8 9.8 0 1 0 -19.6 0M763.85 465.13a9.8 9.8 0 1 0 19.6 0a9.8 9.8 0 1 0 -19.6 0M785.45 449.43a9.8 9.8 0 1 0 19.6 0a9.8 9.8 0 1 0 -19.6 0M755.69 512.68a9.8 9.8 0 1 0 19.6 0a9.8 9.8 0 1 0 -19.6 0M782.49 506.99a9.8 9.8 0 1 0 19.6 0a9.8 9.8 0 1 0 -19.6 0M808.61 501.44a9.8 9.8 0 1 0 19.6 0a9.8 9.8 0 1 0 -19.6 0M755.69 547.12a9.8 9.8 0 1 0 19.6 0a9.8 9.8 0 1 0 -19.6 0M782.49 552.81a9.8 9.8 0 1 0 19.6 0a9.8 9.8 0 1 0 -19.6 0M808.61 558.36a9.8 9.8 0 1 0 19.6 0a9.8 9.8 0 1 0 -19.6 0M741.69 578.57a9.8 9.8 0 1 0 19.6 0a9.8 9.8 0 1 0 -19.6 0M763.85 594.67a9.8 9.8 0 1 0 19.6 0a9.8 9.8 0 1 0 -19.6 0M785.45 610.37a9.8 9.8 0 1 0 19.6 0a9.8 9.8 0 1 0 -19.6 0M716.10 601.61a9.8 9.8 0 1 0 19.6 0a9.8 9.8 0 1 0 -19.6 0M729.80 625.34a9.8 9.8 0 1 0 19.6 0a9.8 9.8 0 1 0 -19.6 0M743.15 648.46a9.8 9.8 0 1 0 19.6 0a9.8 9.8 0 1 0 -19.6 0M683.35 612.25a9.8 9.8 0 1 0 19.6 0a9.8 9.8 0 1 0 -19.6 0M686.22 639.50a9.8 9.8 0 1 0 19.6 0a9.8 9.8 0 1 0 -19.6 0M689.01 666.05a9.8 9.8 0 1 0 19.6 0a9.8 9.8 0 1 0 -19.6 0M649.11 608.65a9.8 9.8 0 1 0 19.6 0a9.8 9.8 0 1 0 -19.6 0M640.65 634.71a9.8 9.8 0 1 0 19.6 0a9.8 9.8 0 1 0 -19.6 0M632.40 660.10a9.8 9.8 0 1 0 19.6 0a9.8 9.8 0 1 0 -19.6 0M619.30 591.43a9.8 9.8 0 1 0 19.6 0a9.8 9.8 0 1 0 -19.6 0M600.96 611.79a9.8 9.8 0 1 0 19.6 0a9.8 9.8 0 1 0 -19.6 0M583.10 631.64a9.8 9.8 0 1 0 19.6 0a9.8 9.8 0 1 0 -19.6 0M599.06 563.58a9.8 9.8 0 1 0 19.6 0a9.8 9.8 0 1 0 -19.6 0M574.03 574.72a9.8 9.8 0 1 0 19.6 0a9.8 9.8 0 1 0 -19.6 0M549.64 585.58a9.8 9.8 0 1 0 19.6 0a9.8 9.8 0 1 0 -19.6 0" fill="none" stroke="#29c82b" stroke-width=".9"/>
<path d="M603.10 539.60A9.8 9.8 0 1 1 603.10 520.20A9.8 9.8 0 0 0 603.10 539.60ZM575.70 539.60A9.8 9.8 0 1 1 575.70 520.20A9.8 9.8 0 0 0 575.70 539.60ZM549.00 539.60A9.8 9.8 0 1 1 549.00 520.20A9.8 9.8 0 0 0 549.00 539.60ZM606.19 505.65A9.8 9.8 0 1 1 614.08 487.93A9.8 9.8 0 0 0 606.19 505.65ZM581.16 494.51A9.8 9.8 0 1 1 589.05 476.79A9.8 9.8 0 0 0 581.16 494.51ZM556.77 483.65A9.8 9.8 0 1 1 564.66 465.93A9.8 9.8 0 0 0 556.77 483.65ZM622.82 475.90A9.8 9.8 0 1 1 637.24 462.92A9.8 9.8 0 0 0 622.82 475.90ZM604.49 455.54A9.8 9.8 0 1 1 618.91 442.56A9.8 9.8 0 0 0 604.49 455.54ZM586.62 435.69A9.8 9.8 0 1 1 601.04 422.71A9.8 9.8 0 0 0 586.62 435.69ZM650.12 455.48A9.8 9.8 0 1 1 668.57 449.49A9.8 9.8 0 0 0 650.12 455.48ZM641.65 429.42A9.8 9.8 0 1 1 660.10 423.43A9.8 9.8 0 0 0 641.65 429.42ZM633.40 404.03A9.8 9.8 0 1 1 651.85 398.03A9.8 9.8 0 0 0 633.40 404.03ZM683.36 447.93A9.8 9.8 0 1 1 702.65 449.96A9.8 9.8 0 0 0 683.36 447.93ZM686.23 420.68A9.8 9.8 0 1 1 705.52 422.71A9.8 9.8 0 0 0 686.23 420.68ZM689.02 394.13A9.8 9.8 0 1 1 708.31 396.16A9.8 9.8 0 0 0 689.02 394.13ZM716.80 454.56A9.8 9.8 0 1 1 733.60 464.26A9.8 9.8 0 0 0 716.80 454.56ZM730.50 430.83A9.8 9.8 0 1 1 747.30 440.53A9.8 9.8 0 0 0 730.50 430.83ZM743.85 407.70A9.8 9.8 0 1 1 760.65 417.40A9.8 9.8 0 0 0 743.85 407.70ZM744.65 474.21A9.8 9.8 0 1 1 756.06 489.90A9.8 9.8 0 0 0 744.65 474.21ZM766.82 458.10A9.8 9.8 0 1 1 778.22 473.80A9.8 9.8 0 0 0 766.82 458.10ZM788.42 442.41A9.8 9.8 0 1 1 799.82 458.10A9.8 9.8 0 0 0 788.42 442.41ZM762.10 503.49A9.8 9.8 0 1 1 766.14 522.46A9.8 9.8 0 0 0 762.10 503.49ZM788.91 497.79A9.8 9.8 0 1 1 792.94 516.77A9.8 9.8 0 0 0 788.91 497.79ZM815.02 492.24A9.8 9.8 0 1 1 819.06 511.22A9.8 9.8 0 0 0 815.02 492.24ZM766.14 537.34A9.8 9.8 0 1 1 762.10 556.31A9.8 9.8 0 0 0 766.14 537.34ZM792.94 543.03A9.8 9.8 0 1 1 788.91 562.01A9.8 9.8 0 0 0 792.94 543.03ZM819.06 548.58A9.8 9.8 0 1 1 815.02 567.56A9.8 9.8 0 0 0 819.06 548.58ZM756.06 569.90A9.8 9.8 0 1 1 744.65 585.59A9.8 9.8 0 0 0 756.06 569.90ZM778.22 586.00A9.8 9.8 0 1 1 766.82 601.70A9.8 9.8 0 0 0 778.22 586.00ZM799.82 601.70A9.8 9.8 0 1 1 788.42 617.39A9.8 9.8 0 0 0 799.82 601.70ZM733.60 595.54A9.8 9.8 0 1 1 716.80 605.24A9.8 9.8 0 0 0 733.60 595.54ZM747.30 619.27A9.8 9.8 0 1 1 730.50 628.97A9.8 9.8 0 0 0 747.30 619.27ZM760.65 642.40A9.8 9.8 0 1 1 743.85 652.10A9.8 9.8 0 0 0 760.65 642.40ZM702.65 609.84A9.8 9.8 0 1 1 683.36 611.87A9.8 9.8 0 0 0 702.65 609.84ZM705.52 637.09A9.8 9.8 0 1 1 686.23 639.12A9.8 9.8 0 0 0 705.52 637.09ZM708.31 663.64A9.8 9.8 0 1 1 689.02 665.67A9.8 9.8 0 0 0 708.31 663.64ZM668.57 610.31A9.8 9.8 0 1 1 650.12 604.32A9.8 9.8 0 0 0 668.57 610.31ZM660.10 636.37A9.8 9.8 0 1 1 641.65 630.38A9.8 9.8 0 0 0 660.10 636.37ZM651.85 661.77A9.8 9.8 0 1 1 633.40 655.77A9.8 9.8 0 0 0 651.85 661.77ZM637.24 596.88A9.8 9.8 0 1 1 622.82 583.90A9.8 9.8 0 0 0 637.24 596.88ZM618.91 617.24A9.8 9.8 0 1 1 604.49 604.26A9.8 9.8 0 0 0 618.91 617.24ZM601.04 637.09A9.8 9.8 0 1 1 586.62 624.11A9.8 9.8 0 0 0 601.04 637.09ZM614.08 571.87A9.8 9.8 0 1 1 606.19 554.15A9.8 9.8 0 0 0 614.08 571.87ZM589.05 583.01A9.8 9.8 0 1 1 581.16 565.29A9.8 9.8 0 0 0 589.05 583.01ZM564.66 593.87A9.8 9.8 0 1 1 556.77 576.15A9.8 9.8 0 0 0 564.66 593.87Z" fill="#0f7e19"/>
<circle cx="684.5" cy="529.9" r="67.4" fill="none" stroke="#20ae27" stroke-width="1.6"/>
<path d="M646.5 475.7 A66.2 66.2 0 0 1 730.5 482.29999999999995" fill="none" stroke="#48dd48" stroke-width="2.2" stroke-linecap="round"/>
<path d="M624.5 553.9 A64.6 64.6 0 0 0 714.5 587.1" fill="none" stroke="#1a9a22" stroke-width="1.2" opacity=".8"/>
<circle cx="684.5" cy="529.9" r="58" fill="none" stroke="#0f701a" stroke-width="2.6"/>
<text x="398.8" y="260.8" font-family="Liberation Sans, sans-serif" font-weight="bold" font-size="20.4" textLength="250.5" lengthAdjust="spacingAndGlyphs" fill="#fff">Creality Textured PEI Plate</text>
<text x="952.6" y="183.4" font-family="Liberation Sans, sans-serif" font-weight="bold" font-size="34.6" textLength="34.6" lengthAdjust="spacingAndGlyphs" fill="#1dc85e" stroke="#1dc85e" stroke-width=".9">01</text>
<circle cx="398" cy="185.3" r="21.7" fill="none" stroke="#c0c0c5" stroke-width="1.9"/>
<path d="M387 195.8 H409.2" stroke="#fff" stroke-width="1.8"/>
<path d="M388.8 191.2 L389.8 186.8 L400.6 176.2 Q401.9 175 403.2 176.2 L404.4 177.4 Q405.6 178.7 404.4 180 L393.4 190.4 Z M399.2 177.8 L402.8 181.4" fill="none" stroke="#fff" stroke-width="1.9" stroke-linejoin="round"/>
<circle cx="1026.3" cy="244.2" r="21.6" fill="none" stroke="#c0c0c5" stroke-width="1.9"/>
<circle cx="1026.3" cy="300.6" r="21.6" fill="none" stroke="#c0c0c5" stroke-width="1.9"/>
<circle cx="1026.3" cy="356.8" r="21.6" fill="none" stroke="#c0c0c5" stroke-width="1.9"/>
<circle cx="1026.3" cy="412.8" r="21.6" fill="none" stroke="#c0c0c5" stroke-width="1.9"/>
<circle cx="1026.3" cy="469" r="21.6" fill="none" stroke="#c0c0c5" stroke-width="1.9"/>
<path d="M1017.9 235.79999999999998 l16.8 16.8 M1034.7 235.79999999999998 l-16.8 16.8" stroke="#fff" stroke-width="2" stroke-linecap="round"/>
<rect x="1015.6999999999999" y="292.0" width="7.2" height="7.2" rx="1.4" fill="#fff"/><rect x="1015.6999999999999" y="302.0" width="7.2" height="7.2" rx="1.4" fill="#fff"/>
<path d="M1025.3 293.0H1037.3M1025.3 298.0H1037.3M1025.3 303.20000000000005H1037.3M1025.3 308.20000000000005H1037.3" stroke="#fff" stroke-width="1.3"/>
<text x="1026.3" y="349.6" text-anchor="middle" font-family="Liberation Sans, sans-serif" font-weight="bold" font-size="8.4" fill="#fff" letter-spacing=".3">AUTO</text>
<path d="M1022.0999999999999 352.40000000000003 L1030.8999999999999 356.40000000000003 L1026.5 364.40000000000003 L1017.6999999999999 360.40000000000003 Z" fill="#fff"/>
<path d="M1017.3 368.40000000000003 H1035.7" stroke="#fff" stroke-width="1.3"/>
<path d="M1031.1 360.40000000000003 Q1034.7 360.6 1034.8999999999999 364.40000000000003 M1032.7 363.2 L1034.8999999999999 365.40000000000003 L1036.8999999999999 363.0" fill="none" stroke="#fff" stroke-width="1.1"/>
<rect x="1018.3" y="411.2" width="16" height="12.6" rx="1.8" fill="#fff"/>
<path d="M1021.0999999999999 411.2 V407.40000000000003 A5.2 5.2 0 0 1 1031.5 407.40000000000003 V408.40000000000003" fill="none" stroke="#fff" stroke-width="2"/>
<circle cx="1026.3" cy="416.40000000000003" r="1.6" fill="#9d9da3"/><rect x="1025.5" y="416.40000000000003" width="1.6" height="4" fill="#9d9da3"/>
<g transform="translate(1026.3 469)" fill="#fff"><path id="gt2" d="M-2.9 -11.2 h5.8 l0.9 3.8 h-7.6 Z"/><use href="#gt2" transform="rotate(60)"/><use href="#gt2" transform="rotate(120)"/><use href="#gt2" transform="rotate(180)"/><use href="#gt2" transform="rotate(240)"/><use href="#gt2" transform="rotate(300)"/><circle r="8.7"/><circle r="4.2" fill="#9d9da3"/></g>
<path d="M1232.4 143.8 L1242.4 152.8 H1239.6 V160.6 H1234.6 V155 H1230.2 V160.6 H1225.2 V152.8 H1222.4 Z" fill="#adadb0"/>
<rect x="1239.2" y="188.4" width="62.6" height="62" fill="#d9d9de"/>
<text x="1270.6" y="231.2" text-anchor="middle" font-family="Liberation Serif, Noto Serif CJK SC, serif" font-size="28.4" fill="#6c6c70">上</text>
<path d="M1261.4 301 V727" stroke="#1dc85e" stroke-width="4"/><circle cx="1261.4" cy="300.8" r="11.2" fill="#1dc85e"/><circle cx="1261.4" cy="727.6" r="11.2" fill="#1dc85e"/>
<path d="M1370.6 183.4 A15.8 47.8 0 0 0 1370.6 279 Z" fill="#d6d6db"/>
<path d="M1360 227.6 L1365.6 232 L1360 236.4 Z" fill="#222"/>
</svg>
<div id="rpanel" style="border-left:1px solid #d8d8dc"></div>
<!-- ===== 耗材 ===== -->
<svg class="abs" style="left:1380px;top:56px" width="30" height="26" viewBox="1380 56 30 26">
 <path d="M1383 64.4 V71.2 A8.2 4.9 0 0 0 1399.4 71.2 V64.4 Z" fill="#333"/>
 <ellipse cx="1391.2" cy="64.4" rx="8.2" ry="4.9" fill="#333"/>
 <path d="M1384.6 68.6 Q1391.2 73.6 1397.8 68.6" fill="none" stroke="#fff" stroke-width="1.5"/>
 <g fill="#fff"><ellipse cx="1386.6" cy="63.2" rx="1.4" ry=".95"/><ellipse cx="1390.2" cy="61.6" rx="1.4" ry=".95"/><ellipse cx="1394.4" cy="62.2" rx="1.4" ry=".95"/><ellipse cx="1391.6" cy="64.6" rx="1.4" ry=".95"/><ellipse cx="1387.6" cy="66.4" rx="1.4" ry=".95"/><ellipse cx="1395.6" cy="65.4" rx="1.4" ry=".95"/><ellipse cx="1392" cy="67.6" rx="1.4" ry=".95"/></g>
 <path d="M1399.2 67.6 Q1403.4 70.4 1402.4 73.6 Q1401.6 76 1399.2 77.2" fill="none" stroke="#333" stroke-width="1.6" stroke-linecap="round"/>
</svg>
<div class="h1" style="left:1408px;top:58.5px">耗材</div>
<svg class="abs" style="left:1750px;top:56px" width="170" height="26" viewBox="1750 56 170 26">
 <g fill="none" stroke="#333" stroke-width="1.4" stroke-linecap="round" stroke-linejoin="round">
  <circle cx="1764.1" cy="68.7" r="8.3"/><path d="M1759.6 68.7h9M1764.1 64.2v9" stroke-width="1.8"/>
  <circle cx="1799" cy="68.7" r="8.3"/><path d="M1794.5 68.7h9" stroke-width="1.8"/>
  <rect x="1826" y="60.6" width="16.4" height="16.6" rx="2"/>
  <path d="M1829.6 66.6h9.2l-2.6-2.4M1838.8 71h-9.2l2.6 2.4" stroke-width="1.2"/>
  <circle cx="1869.1" cy="68.7" r="3"/>
  <path d="M1867.5 60 h3.2 l.5 2.3 l1.9 .8 l2-1.3 l2.2 2.2 l-1.3 2 l.8 1.9 l2.3 .5 v3.2 l-2.3 .5 l-.8 1.9 l1.3 2 l-2.2 2.2 l-2-1.3 l-1.9 .8 l-.5 2.3 h-3.2 l-.5-2.3 l-1.9-.8 l-2 1.3 l-2.2-2.2 l1.3-2 l-.8-1.9 l-2.3-.5 v-3.2 l2.3-.5 l.8-1.9 l-1.3-2 l2.2-2.2 l2 1.3 l1.9-.8 Z" stroke-width="1.3"/>
  <path d="M1896 68l3-3l3 3M1896 73.2l3-3l3 3" stroke-width="1.4"/>
 </g>
</svg>
<div class="abs" style="left:1379.2px;top:90.2px;width:129.6px;height:59.6px;border-radius:6px;background:#2bbd61"></div>
<div class="abs" style="left:1381.4px;top:92.6px;width:125.2px;height:54.8px;border-radius:4.5px;background:#a8f7b0"></div>
<div class="abs" style="left:1382.4px;top:93.6px;width:123.2px;height:52.8px;border-radius:4px;background:#03cc04"></div>
<div class="t" style="left:1379px;top:97.6px;width:129.4px;text-align:center;font-size:16.8px;color:#0a420a">1</div>
<div class="t" style="left:1424.2px;top:124.4px;font-size:15.6px;color:#0a420a"><span class="sx" style="transform:scaleX(.95)">PLA</span></div>
<svg class="abs" style="left:1456px;top:130.4px" width="10" height="6" viewBox="0 0 10 6"><path d="M1.4 1h6.8l-3.4 3.6Z" fill="#0a3a0a"/></svg>
<div class="abs" style="left:1371px;top:166px;width:549px;height:1px;background:#dcdcdf"></div>
<!-- ===== 对象 ===== -->
<svg class="abs" style="left:1380px;top:190px" width="26" height="26" viewBox="1380 190 26 26">
 <path d="M1392.6 193.4 L1401.6 198.2 V208 L1392.6 213 L1383.8 208 V198.2 Z M1383.8 198.2 L1392.6 203.2 L1401.6 198.2 M1392.6 203.2 V213" fill="none" stroke="#333" stroke-width="1.9" stroke-linejoin="round"/>
</svg>
<div class="h1" style="left:1408px;top:192px">对象</div>
<svg class="abs" style="left:1890px;top:194px" width="16" height="18" viewBox="1890 194 16 18"><path d="M1895.4 202l3-3l3 3M1895.4 207.2l3-3l3 3" fill="none" stroke="#333" stroke-width="1.4" stroke-linecap="round" stroke-linejoin="round"/></svg>
<div class="abs" style="left:1383px;top:228px;width:524px;height:120px;border:1px solid #dfdfe2;border-radius:4px;background:#fff;overflow:hidden">
 <div class="abs" style="left:0;top:28px;width:515px;height:1px;background:#e3e3e6"></div>
 <div class="abs" style="left:199px;top:0;width:1px;height:28px;background:#e3e3e6"></div>
 <div class="abs" style="left:236px;top:0;width:1px;height:28px;background:#e3e3e6"></div>
 <div class="abs" style="left:323px;top:0;width:1px;height:28px;background:#e3e3e6"></div>
 <div class="abs" style="left:483px;top:0;width:1px;height:28px;background:#e3e3e6"></div>
 <div class="t" style="left:0;top:4px;width:199px;text-align:center;font-size:14.5px;color:#555">名称</div>
 <div class="t" style="left:237px;top:4px;width:86px;text-align:center;font-size:14.5px;color:#555">耗材</div>
 <div class="abs" style="left:0;top:29px;width:515px;height:30px;background:#1dc85e"></div>
 <svg class="abs" style="left:3px;top:41px" width="10" height="6" viewBox="0 0 10 6"><path d="M1 1h7l-3.5 3.8Z" fill="#333"/></svg>
 <div class="t" style="left:16px;top:35px;font-size:14.5px;color:#215c38">盘 1</div>
 <div class="t" style="left:32.4px;top:64.8px;font-size:16.6px;color:#555"><span class="sx" style="transform:scaleX(.905)">go2-base.stl</span></div>
 <svg class="abs" style="left:208.2px;top:66.4px" width="20" height="14" viewBox="0 0 20 14"><path d="M3.4 7 Q10 0.2 16.6 7 Q10 13.8 3.4 7 Z" fill="none" stroke="#333" stroke-width="1.4"/><circle cx="10" cy="7" r="2.4" fill="#333"/></svg>
 <div class="abs" style="left:261px;top:63px;width:38px;height:22px;border-radius:8px;background:#03cc04;color:#0a420a;font-size:15px;line-height:22px;text-align:center">1</div>
 <div class="t" style="left:16px;top:95px;font-size:14.5px;color:#555">盘外</div>
 <div class="abs" style="left:515px;top:0;width:8px;height:118px;background:#d2d2d4;border-radius:0 3px 3px 0"></div>
</div>
<div class="abs" style="left:1371px;top:366px;width:549px;height:1px;background:#dcdcdf"></div>
<!-- ===== 工艺 ===== -->
<svg class="abs" style="left:1380px;top:392px" width="26" height="26" viewBox="1380 392 26 26">
 <g stroke="#333" stroke-width="1.9" stroke-linecap="round"><path d="M1385.6 396V414.2M1393 396V414.2M1400.4 396V414.2"/></g>
 <g fill="#333"><ellipse cx="1385.6" cy="407.6" rx="2.5" ry="3"/><ellipse cx="1393" cy="400.6" rx="2.5" ry="3"/><ellipse cx="1400.4" cy="407.6" rx="2.5" ry="3"/></g>
</svg>
<div class="h1" style="left:1408px;top:394.5px">工艺</div>
<div class="abs" style="left:1465px;top:394px;width:1px;height:21px;background:#d4d4d8"></div>
<div class="abs" style="left:1478px;top:392px;width:118px;height:25px;border:1px solid #dcdcdf;border-radius:6px;background:#fff;overflow:hidden">
 <div class="abs" style="left:0;top:0;width:58px;height:23px;background:#1dc85e;border-radius:5px 0 0 5px"></div>
 <div class="t" style="left:0;top:3px;width:58px;text-align:center;font-size:16.5px;color:#f0fff5">全局</div>
 <div class="t" style="left:58px;top:3px;width:58px;text-align:center;font-size:16.5px;color:#333">对象</div>
</div>
<svg class="abs" style="left:1775px;top:392px" width="130" height="26" viewBox="1775 392 130 26">
 <g stroke="#1dc85e" stroke-width="1.6" stroke-linecap="round"><path d="M1778.4 398h7.4M1778.4 404.2h7.4M1778.4 410.4h7.4M1793.6 398h2M1793.6 404.2h2M1793.6 410.4h2"/></g>
 <g fill="#1dc85e"><circle cx="1789.6" cy="398" r="2.3"/><circle cx="1789.6" cy="404.2" r="2.3"/><circle cx="1789.6" cy="410.4" r="2.3"/></g>
 <path d="M1818.8 411.8 A8 8 0 1 1 1827 411 M1815.4 411.8h4.2v-3.6" fill="none" stroke="#dbdbde" stroke-width="1.7" stroke-linecap="round" stroke-linejoin="round"/>
 <path d="M1849 396.8h16.2v15.6h-16.2Z M1852.2 396.8v6h9.8v-6 M1859.4 398.4v2.6" fill="none" stroke="#dbdbde" stroke-width="1.6" stroke-linejoin="round"/>
 <g stroke="#333" stroke-width="1.4" fill="none"><path d="M1888 402.6L1893.2 399.6M1896.6 406.2L1891 409.2"/><circle cx="1885.8" cy="403.8" r="2.3"/><circle cx="1898.8" cy="405" r="2.3"/></g>
 <g fill="#333"><circle cx="1895.4" cy="398.3" r="2.7"/><circle cx="1888.8" cy="410.4" r="2.7"/></g>
</svg>
<div class="abs" style="left:1383px;top:429px;width:488px;height:29px;border:1px solid #dcdcdf;border-radius:6px;background:#fff"></div>
<div class="t" style="left:1389px;top:434px;font-size:16px;color:#444">0.28-PLA</div>
<svg class="abs" style="left:1848px;top:440px" width="12" height="8" viewBox="0 0 12 8"><path d="M2.4 1.2h8.4l-4.2 5.6Z" fill="#222"/></svg>
<svg class="abs" style="left:1880px;top:432px" width="26" height="26" viewBox="1880 432 26 26"><circle cx="1892.8" cy="443.8" r="9" fill="none" stroke="#222" stroke-width="2.1"/><path d="M1899.4 450.4 L1902.4 453.4" stroke="#222" stroke-width="2.2" stroke-linecap="round"/></svg>
<!-- tab strip -->
<div class="abs" style="left:1335px;top:472px;width:37px;height:192px;border:1px solid #dedee1;border-right:none;border-radius:7px 0 0 7px;background:#fff"></div>
<div class="abs" style="left:1336px;top:478px;width:35px;height:35px;border-radius:9px 0 0 9px;background:#1dc85e"></div>
<svg class="abs" style="left:1336px;top:472px" width="36" height="192" viewBox="1336 472 36 192">
 <g fill="#e9fff0"><rect x="1343.4" y="484.4" width="6.4" height="2.8" rx=".8"/><rect x="1343.4" y="491.4" width="14.6" height="4.2" rx=".8"/><rect x="1343.4" y="499.4" width="23" height="7.4" rx=".8"/></g>
 <g fill="none" stroke="#333" stroke-width="1.7" stroke-linecap="round" stroke-linejoin="round">
  <rect x="1344.2" y="522.2" width="21.4" height="20" rx="3.6"/>
  <rect x="1348.6" y="526.4" width="12.6" height="11.6" stroke-width="1.3" stroke-dasharray="2.6 2.2"/>
  <path d="M1348.8 576 A9.6 9.6 0 1 1 1362.4 576" stroke-width="1.7"/>
  <path d="M1355.6 561.6v1.4M1349.6 564.6l1 1M1361.6 564.6l-1 1" stroke-width="1.1"/>
  <path d="M1353.6 570.6 L1359.6 566.6 L1355.8 572.2 Z" fill="#333" stroke-width="1"/>
  <path d="M1343.4 615.2H1366.4" stroke-width="1.9"/>
  <path d="M1346.6 614.6 V609 Q1346.8 604.4 1350.6 603.4 M1363.2 614.6 V609 Q1363 605.4 1360.4 604.4 M1352 614.6 V608 M1357.8 614.6 V608" stroke-width="1.7"/>
  <path d="M1351.2 593.8 L1363.8 602 L1358.6 608.2 L1346 601.4 Z" fill="#333" stroke-width="1.2"/>
  <circle cx="1349.4" cy="635.6" r="4.9"/><circle cx="1360.4" cy="635.6" r="4.9"/><circle cx="1349.4" cy="646.4" r="4.9"/><circle cx="1360.4" cy="646.4" r="4.9"/>
 </g>
</svg>
<!-- param panel -->
<div class="abs" style="left:1370px;top:478px;width:538px;height:322.6px;border:1px solid #86dca6;border-radius:0 5px 5px 0;background:#fff;overflow:hidden"></div>
<div class="abs" style="left:1899px;top:481px;width:7px;height:36px;border-radius:3px;background:#c9c9cc"></div>
<!-- group 层高 -->
<svg class="abs" style="left:1388px;top:500px" width="22" height="22" viewBox="1388 500 22 22">
 <path d="M1399 503.6 L1406.4 506.8 L1399 510 L1391.6 506.8 Z" fill="#333"/>
 <path d="M1391.6 509.6 L1399 512.8 L1406.4 509.6 M1391.6 512.6 L1399 515.8 L1406.4 512.6" fill="none" stroke="#333" stroke-width="2" stroke-linejoin="round" stroke-linecap="round"/>
</svg>
<div class="t" style="left:1420.6px;top:501px;font-size:16.4px;color:#444">层高</div>
<div class="abs" style="left:1466px;top:510px;width:396px;height:1px;background:#dadadd"></div>
<svg class="abs" style="left:1872px;top:504px" width="16" height="12" viewBox="0 0 16 12"><path d="M2.6 8.6L8 3.4l5.4 5.2" fill="none" stroke="#aaa" stroke-width="1.3"/></svg>
<div class="lbl" style="top:540px">层高</div>
<div class="inp" style="top:534.4px"><b>0.28</b><i class="m">mm</i></div>
<div class="lbl" style="top:576px">首层层高</div>
<div class="inp" style="top:570.6px"><b>0.22</b><i class="m">mm</i></div>
<!-- group 线宽 -->
<svg class="abs" style="left:1388px;top:630px" width="22" height="20" viewBox="1388 630 22 20">
 <rect x="1391.4" y="636.6" width="15.4" height="1.3" fill="#aaa"/><rect x="1391.4" y="639.4" width="15.4" height="3.6" fill="#bdbdc0"/>
 <path d="M1393.4 639.4v2M1395.8 639.4v2M1398.2 639.4v2M1400.6 639.4v2M1403 639.4v2M1405.2 639.4v2" stroke="#8a8a8e" stroke-width=".6"/>
</svg>
<div class="t" style="left:1420.6px;top:630px;font-size:16.4px;color:#444">线宽</div>
<div class="abs" style="left:1466px;top:639px;width:396px;height:1px;background:#dadadd"></div>
<svg class="abs" style="left:1872px;top:633px" width="16" height="12" viewBox="0 0 16 12"><path d="M2.6 8.6L8 3.4l5.4 5.2" fill="none" stroke="#aaa" stroke-width="1.3"/></svg>
<div class="lbl" style="top:669px">缺省</div>
<div class="inp" style="top:663.4px"><b>0.45</b><i>mm or %</i></div>
<div class="lbl" style="top:705px">首层</div>
<div class="inp" style="top:699.6px"><b>0.5</b><i>mm or %</i></div>
<div class="lbl" style="top:741px">外墙</div>
<div class="inp" style="top:735.8px"><b>0.42</b><i>mm or %</i></div>
<div class="lbl" style="top:777px">内墙</div>
<div class="inp" style="top:772px"><b>0.45</b><i>mm or %</i></div>
<div class="abs" style="left:1371px;top:800px;width:540px;height:12px;background:#fff"></div>
<div class="abs" style="left:1370px;top:789.6px;width:538px;height:11px;border:1px solid #86dca6;border-top:none;border-left:none;border-radius:0 0 5px 0"></div>
<!-- bottom preview box -->
<div class="abs" style="left:1383px;top:820px;width:525px;height:187px;border:1px solid #d9d9dd;border-radius:6px;background:#fff;overflow:hidden">
 <svg style="left:0;top:0" width="523" height="185" viewBox="1384 821 523 185"><filter id="bl" x="-5%" y="-5%" width="110%" height="110%"><feGaussianBlur stdDeviation=".55"/></filter><g filter="url(#bl)">
  <defs><clipPath id="cl"><path d="M1544 926 L1644.3 981 V1010 H1544 Z"/></clipPath></defs>
  <path d="M1544 934 Q1544 926 1551 922 L1632 877 Q1644.3 870.5 1656.6 877 L1738.6 922 Q1745.6 926 1745.6 934 V1010 H1544 Z" fill="#b2b2b2"/>
  <path d="M1544 934 Q1544 926 1551 922 L1632 877 Q1644.3 870.5 1656.6 877 L1738.6 922 Q1745.6 926.6 1738.6 931 L1656.6 976.6 Q1644.3 983 1632 976.6 L1551 931 Q1544 926.6 1544 934 Z" fill="#c1c1c1"/>
  <path d="M1544 930 L1551 934 L1632 979.6 Q1644.3 986 1644.3 986 V1010 H1544 Z" fill="#b9b9b9"/>
  <g clip-path="url(#cl)" stroke="#adadad" stroke-width="1.3" fill="none">
   <path d="M1540 936.8 L1650 997 M1540 942.6 L1650 1002.8 M1540 948.4 L1650 1008.6 M1540 954.2 L1650 1014.4 M1540 960 L1650 1020.2 M1540 965.8 L1650 1026 M1540 971.6 L1650 1031.8 M1540 977.4 L1650 1037.6 M1540 983.2 L1650 1043.4 M1540 989 L1650 1049.2 M1540 994.8 L1650 1055"/>
  </g>
  <path d="M1579 931 Q1573 927.6 1579 924.4 L1636 892 Q1644.3 887.6 1652.6 892 L1710 924.4 Q1716 927.6 1710 931 L1652.6 963.4 Q1644.3 967.6 1636 963.4 Z" fill="none" stroke="#c9c9c9" stroke-width="1.4"/>
  </g>
  <path d="M1888 833l3 3l3-3M1888 838.4l3 3l3-3" fill="none" stroke="#222" stroke-width="1.5" stroke-linecap="round" stroke-linejoin="round"/>
 </svg>
 <div class="abs" style="left:7px;top:150px;width:300px;height:40px;font-size:29px;line-height:36px;color:rgba(118,118,118,.62);white-space:nowrap;overflow:hidden;-webkit-mask-image:linear-gradient(90deg,#000 0,#000 222px,rgba(0,0,0,.4) 252px,transparent 286px);mask-image:linear-gradient(90deg,#000 0,#000 222px,rgba(0,0,0,.4) 252px,transparent 286px)">dooooit@dooooit_7099</div>
</div>
<!-- slice buttons -->
<div class="abs" style="left:1055px;top:868px;width:270px;height:70px;border-radius:13px;background:#e4e4e7"></div>
<div class="abs" style="left:1067px;top:880px;width:188px;height:45px;border-radius:4px;background:#1dc85e;color:#fff;font-weight:bold;font-size:17px;line-height:46px;text-align:center">单盘切片</div>
<div class="abs" style="left:1268px;top:880px;width:45px;height:45px;border-radius:4px;background:#fff"></div>
<svg class="abs" style="left:1283px;top:897px" width="16" height="12" viewBox="0 0 16 12"><path d="M3.8 8L7.6 4.2l3.8 3.8" fill="none" stroke="#222" stroke-width="1.9" stroke-linecap="round" stroke-linejoin="round"/></svg>
<div class="abs" style="left:1055px;top:943px;width:270px;height:70px;border-radius:13px;background:#e4e4e7"></div>
<div class="abs" style="left:1067px;top:955px;width:188px;height:45px;border-radius:4px;background:#fff;color:#222;font-weight:bold;font-size:17px;line-height:46px;text-align:center">打印单盘</div>
<div class="abs" style="left:1268px;top:955px;width:45px;height:45px;border-radius:4px;background:#fff"></div>
<svg class="abs" style="left:1283px;top:972px" width="16" height="12" viewBox="0 0 16 12"><path d="M3.8 8L7.6 4.2l3.8 3.8" fill="none" stroke="#222" stroke-width="1.9" stroke-linecap="round" stroke-linejoin="round"/></svg>
<!-- status box -->
<div class="abs" style="left:8px;top:904px;width:321px;height:108px;border-radius:7px;background:#e5e5e8"></div>
<svg class="abs" style="left:30px;top:932px" width="20" height="56" viewBox="30 932 20 56">
 <g fill="none" stroke="#222" stroke-width="2"><rect x="33" y="936" width="12.9" height="11.8" rx="2.2"/><rect x="33" y="970.4" width="12.9" height="11.8" rx="2.2"/></g>
 <path d="M33 942.6H46M37 942.4q2.4-2.4 4.8 0M33 977H46M37 976.8q2.4-2.4 4.8 0" stroke="#222" stroke-width="1.3" fill="none"/>
</svg>
<div class="t" style="left:53.6px;top:932px;font-size:16.4px;color:#333">项目:</div>
<div class="t" style="left:93px;top:932px;font-size:17.5px;color:#333;letter-spacing:.35px">Untitled</div>
<div class="t" style="left:158.4px;top:930px;font-size:16.5px;color:#e0242a">*</div>
<div class="t" style="left:53.6px;top:967px;font-size:16.4px;color:#333">打印机:</div>
<div class="t" style="left:109.6px;top:967px;font-size:17.5px;color:#333"><span class="sx" style="transform:scaleX(.945)">Ender-3 S1 Pro-0.4</span></div>
</body>
</html>
